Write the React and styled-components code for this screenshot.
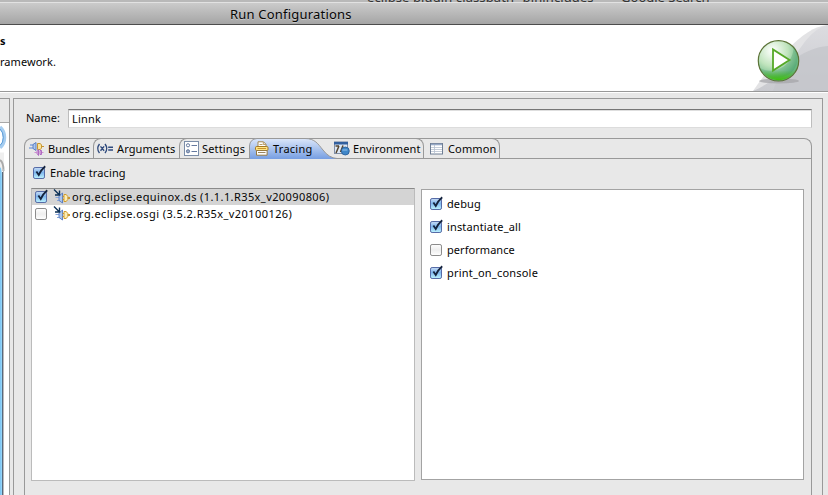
import React from 'react';
import styled, { createGlobalStyle } from 'styled-components';

const GlobalStyle = createGlobalStyle`
  * { box-sizing: border-box; }
  html, body { margin: 0; padding: 0; overflow: hidden; }
  body { font: 11px/16px "Lucida Grande", "Noto Sans", sans-serif; color: #050505; background: #e8e8e8; }
  svg { display: block; flex: none; overflow: visible; }
`;

const Window = styled.div`
  width: 828px;
  height: 495px;
  display: flex;
  flex-direction: column;
  overflow: hidden;
  background: #e8e8e8;
`;

const Backdrop = styled.div`
  height: 2px;
  flex: none;
  display: flex;
  align-items: flex-end;
  padding-left: 367px;
  overflow: hidden;
  background: #b9b9b9;
  font-size: 13px;
  line-height: 14px;
  color: #333;
  white-space: pre;
`;

const BackdropText = styled.span`
  flex: none;
  margin-bottom: -2px;
  margin-right: 22px;
  letter-spacing: ${(p) => p.$ls || 0}px;
`;

const TitleBar = styled.div`
  height: 23px;
  flex: none;
  padding-left: 230px;
  border-top: 1px solid #e2e2e2;
  border-bottom: 1px solid #4c4c4c;
  background: linear-gradient(#cbcbcb, #a5a5a5);
  font-size: 13px;
  line-height: 22px;
  text-shadow: 0 1px 0 rgba(255, 255, 255, 0.35);
`;

const Text = styled.span`
  display: inline-block;
  white-space: pre;
  letter-spacing: ${(p) => p.$ls || 0}px;
  font-weight: ${(p) => (p.$bold ? 700 : 400)};
`;

const Header = styled.header`
  height: 68px;
  flex: none;
  display: flex;
  justify-content: space-between;
  background: #fff;
  border-bottom: 1px solid #fff;
  box-shadow: inset 0 -1px 0 #999;
`;

const HeaderText = styled.div`
  display: flex;
  flex-direction: column;
  gap: 5px;
  padding-top: 8px;
`;

const Body = styled.div`
  flex: 1;
  min-height: 0;
  display: flex;
  gap: 3px;
  padding: 5px 5px 0 0;
`;

const Sidebar = styled.aside`
  width: 10px;
  display: flex;
  flex-direction: column;
  border-top: 1px solid #999;
  border-right: 1px solid #999;
  background: #fff;
`;

const SidebarTools = styled.div`
  height: 24px;
  flex: none;
  background: #e8e8e8;
  border-bottom: 1px solid #a8a8a8;
`;

const Panel = styled.main`
  flex: 1;
  display: flex;
  flex-direction: column;
  padding: 10px 10px 0;
  border: 1px solid #999;
  border-bottom: 0;
`;

const NameRow = styled.label`
  display: flex;
  height: 19px;
  padding-left: 2px;
  line-height: 17px;
`;

const NameLabel = styled.span`
  width: 42px;
`;

const NameField = styled.div`
  flex: 1;
  padding-left: 3px;
  background: #fff;
  border: 1px solid #bdbdbd;
  border-top-color: #777;
  border-bottom-color: #dcdcdc;
  box-shadow: inset 0 1px 0 #dedede;
`;

const Folder = styled.section`
  flex: 1;
  display: flex;
  flex-direction: column;
  margin-top: 10px;
  border: 1px solid #999;
  border-bottom: 0;
  border-radius: 8px 8px 0 0;
`;

const TabBar = styled.div`
  height: 20px;
  flex: none;
  display: flex;
  border-bottom: 1px solid #999;
`;

const Tab = styled.div`
  width: ${(p) => p.$w}px;
  height: 21px;
  flex: none;
  display: flex;
  align-items: center;
  gap: ${(p) => p.$gap}px;
  padding-left: ${(p) => p.$pad}px;
  white-space: nowrap;
  margin-top: -1px;
  border: 0 solid #999;
  ${(p) => p.$edge === 'left' && 'height: 20px; border-left-width: 1px; border-top-width: 1px; border-top-left-radius: 8px;'}
  ${(p) => p.$edge === 'right' && 'height: 20px; border-right-width: 1px; border-top-width: 1px; border-top-right-radius: 8px;'}
`;

const ActiveTab = styled(Tab)`
  position: relative;
  z-index: 1;
`;

const TabShape = styled.svg`
  position: absolute;
  left: 0;
  top: 0;
  z-index: -1;
`;

const EnableRow = styled.div`
  height: 29px;
  flex: none;
  display: flex;
  align-items: center;
  gap: 4px;
  padding: 0 0 2px 8px;
`;

const Lists = styled.div`
  display: flex;
  gap: 6px;
  padding-left: 6px;
`;

const PluginList = styled.div`
  width: 384px;
  height: 293px;
  background: #fff;
  border: 1px solid #bbb;
  border-top-color: #8a8a8a;
`;

const PluginRow = styled.div`
  height: ${(p) => (p.$selected ? 16 : 18)}px;
  display: flex;
  align-items: center;
  padding-left: 3px;
  background: ${(p) => (p.$selected ? '#d4d4d4' : '#fff')};
  & > svg + svg { margin: 0 2px 0 6px; }
`;

const OptionList = styled.div`
  width: 383px;
  height: 291px;
  margin-top: 1px;
  padding: 2px 0 0 8px;
  background: #fff;
  border: 1px solid #a3a3a3;
`;

const OptionRow = styled.div`
  height: 23px;
  display: flex;
  align-items: center;
  gap: 4px;
`;

function Check({ on }) {
  return (
    <svg width="13" height="14" viewBox="0 0 13 14">
      <defs>
        <linearGradient id="ckOn" x1="0" y1="0" x2="0" y2="1">
          <stop offset="0" stopColor="#c9dcf5" />
          <stop offset=".45" stopColor="#7fb6ee" />
          <stop offset="1" stopColor="#bdf4ff" />
        </linearGradient>
        <linearGradient id="ckOff" x1="0" y1="0" x2="0" y2="1">
          <stop offset="0" stopColor="#fff" />
          <stop offset=".5" stopColor="#eee" />
          <stop offset="1" stopColor="#fff" />
        </linearGradient>
      </defs>
      <rect x=".5" y="1.5" width="11" height="11" rx="1.6" fill={on ? 'url(#ckOn)' : 'url(#ckOff)'} stroke={on ? '#566ba6' : '#8b8b8b'} />
      {on && <path d="M3.4 5.6 L5.7 9 Q8 4 12.2 .3" fill="none" stroke="#15233d" strokeWidth="1.8" />}
    </svg>
  );
}

function PluginIcon() {
  return (
    <svg width="16" height="16" viewBox="0 0 16 16">
      <path d="M1.500 8.500H5M3 11.500h3" stroke="#86a5dc" strokeWidth="1.2" />
      <path d="M5 7 8.500 4v10L5 11.500z" fill="#a9c5ef" stroke="#5579bd" strokeWidth=".9" />
      <path d="M10 5.500h2.200l1.600 2v3l-1.600 2H10z" fill="#fdeeb4" stroke="#d09b2e" />
      <path d="M8.500 7.500H10M8.500 10.500H10M14 8.500h2M14 9.500h2" stroke="#c79632" />
      <path d="M0 .5 5 5.500M5.500 1.500V6H1" fill="none" stroke="#0d3157" strokeWidth="1.4" />
    </svg>
  );
}

function BundlesIcon() {
  return (
    <svg width="16" height="16" viewBox="0 0 16 16">
      <path d="M1 4h4M0 7h4" stroke="#86a5dc" strokeWidth="1.4" />
      <path d="M4 3.500 7 1.500v8L4 7.500z" fill="#a9c5ef" stroke="#5579bd" strokeWidth=".9" />
      <path d="M8.500 2.500h2.800l1.200 1.500v3l-1.200 1.500H8.500z" fill="#fbe49a" stroke="#c79632" />
      <path d="M12.500 5.500H15" stroke="#c79632" />
      <path d="M5.500 11.500h2M12.500 11.500h2" stroke="#d08cd3" />
      <path d="M9.500 8.500 8 10.500v2l1.500 2zM11 9.500h1.500v4H11z" fill="#e7bce7" stroke="#a960bd" strokeWidth=".9" />
    </svg>
  );
}

function ArgumentsIcon() {
  return (
    <svg width="17" height="12" viewBox="0 0 17 12" fill="none" stroke="#2f4a7d" strokeWidth="1.4">
      <path d="M2.500 1Q-1 5.500 2.500 10M8 1q3.500 4.500 0 9M3.500 3.400l3.600 4.400M7.100 3.400 3.500 7.800M11.200 4.300H16M11.200 7H16" />
    </svg>
  );
}

function SettingsIcon() {
  return (
    <svg width="15" height="15" viewBox="0 0 15 15">
      <rect x=".5" y=".5" width="14" height="14" fill="#fff" stroke="#7b8da8" />
      <circle cx="4" cy="4.300" r="1.600" fill="#fff" stroke="#65799e" />
      <circle cx="4" cy="10.300" r="1.600" fill="#9cabc5" stroke="#65799e" />
      <path d="M7.500 4.500H13M7.500 10.500H13" stroke="#65799e" />
    </svg>
  );
}

function TracingIcon() {
  return (
    <svg width="14" height="15" viewBox="0 0 14 15">
      <path d="M3 6V.8h5.500L11 3.300V6" fill="#fff" stroke="#a28852" />
      <path d="M8.300 1v2.500H11M4.500 3.500h3" fill="none" stroke="#b89d68" />
      <rect x=".5" y="5.500" width="12.500" height="4" rx="1.200" fill="#ffe584" stroke="#a47823" />
      <path d="M2.500 7.500h8.600" stroke="#c9942e" />
      <path d="M1.500 9.500h10.600v4.700H1.500z" fill="#fff" stroke="#987a40" />
      <path d="M3 11.500h7.500" stroke="#9b8661" />
    </svg>
  );
}

function EnvironmentIcon() {
  return (
    <svg width="16" height="15" viewBox="0 0 16 15">
      <rect x=".5" y="1" width="13" height="11.500" fill="#dde8f5" stroke="#8290a8" />
      <path d="M0 2.200h14" stroke="#315f9e" strokeWidth="2.600" />
      <path d="M1.500 5h3.500M5 5 2 12M9 4.500 6.500 11" fill="none" stroke="#56452f" strokeWidth="1.500" />
      <circle cx="11.300" cy="10" r="4" fill="#3f86c8" stroke="#245994" strokeWidth=".8" />
      <path d="M8.300 9h5" stroke="#8fbfe8" strokeWidth="1.100" />
    </svg>
  );
}

function CommonIcon() {
  return (
    <svg width="13" height="12" viewBox="0 0 13 12">
      <rect x=".5" y=".5" width="12" height="10.500" fill="#fff" stroke="#6f7e94" />
      <path d="M1 1.500h11" stroke="#96a9c6" strokeWidth="1.600" />
      <path d="M1 4.500h11M1 6.500h11M1 8.500h11M4.500 2v9" stroke="#b6c0cf" strokeWidth=".8" />
    </svg>
  );
}

function RunBanner() {
  return (
    <svg width="75" height="66" viewBox="0 0 75 66">
      <defs>
        <radialGradient id="ball" cx=".35" cy=".25" r=".85">
          <stop offset="0" stopColor="#fff" />
          <stop offset=".45" stopColor="#c0e4bd" />
          <stop offset=".8" stopColor="#6cb886" />
          <stop offset="1" stopColor="#55aa5c" />
        </radialGradient>
        <linearGradient id="glow" x1="0" y1="0" x2="0" y2="1">
          <stop offset=".75" stopColor="#43b618" stopOpacity="0" />
          <stop offset="1" stopColor="#3fc00c" />
        </linearGradient>
        <linearGradient id="swoosh" x1="0" y1="0" x2="0" y2="1">
          <stop offset="0" stopColor="#dcdce0" />
          <stop offset="1" stopColor="#c9cacf" />
        </linearGradient>
        <clipPath id="bannerClip"><path d="M0 0h75v66H0z" /></clipPath>
      </defs>
      <g clipPath="url(#bannerClip)">
        <path d="M0 66C10 51 20 39 35 24C49 10 61 1 75 0V66z" fill="#e3e3e5" />
        <path d="M0 66C17 59 31 46 41 32C52 17 59 4 75 0V66z" fill="url(#swoosh)" />
        <path d="M20 66C29 38 52 23 75 21V66z" fill="#c4c5cb" opacity=".8" />
      </g>
      <ellipse cx="26" cy="56" rx="20" ry="2.400" fill="#a5a6aa" opacity=".75" />
      <circle cx="25.500" cy="35.800" r="20.200" fill="url(#ball)" stroke="#5c7338" strokeWidth="1.200" />
      <path d="M41 21C48 34 44 48 30 52C18 55 9 50 7 43C17 49 39 46 41 21z" fill="#2b8c55" opacity=".25" />
      <circle cx="25.500" cy="35.800" r="19.400" fill="url(#glow)" />
      <path d="M20 24.500v21L36.500 35z" fill="#fff" stroke="#56a927" strokeWidth="1.800" />
    </svg>
  );
}

function SidebarArt() {
  return (
    <svg width="9" height="373" viewBox="0 0 9 373">
      <defs>
        <linearGradient id="bar" x1="0" y1="0" x2="1" y2="0">
          <stop offset="0" stopColor="#6fb9ee" />
          <stop offset=".7" stopColor="#9fe0ff" />
          <stop offset="1" stopColor="#5798d4" />
        </linearGradient>
      </defs>
      <path d="M0 4Q4.500 8 4.500 14.500 4.500 21 0 24.500" fill="none" stroke="#a6cdf0" strokeWidth="3.500" />
      <path d="M0 6Q3.300 9 3.300 14.500 3.300 20 0 22.500" fill="none" stroke="#5a9bd8" />
      <path d="M0 29.500h4V373H0z" fill="#efefef" />
      <path d="M0 37Q3.500 39 3.500 48" stroke="#aaa" strokeWidth="2" fill="none" />
      <path d="M0 44Q2 46 2 53V373H0z" fill="url(#bar)" />
      <path d="M2.500 49V373" stroke="#57677c" />
      <path d="M3.500 46V373" stroke="#bbb" />
    </svg>
  );
}

const pluginRows = [
  { name: 'org.eclipse.equinox.ds (1.1.1.R35x_v20090806)', on: true, ls: 0.41 },
  { name: 'org.eclipse.osgi (3.5.2.R35x_v20100126)', on: false, ls: 0.42 },
];

const options = [
  { name: 'debug', on: true, ls: 0.1 },
  { name: 'instantiate_all', on: true, ls: 0.15 },
  { name: 'performance', on: false, ls: 0.05 },
  { name: 'print_on_console', on: true, ls: 0.2 },
];

export default function App() {
  return (
    <Window>
      <GlobalStyle />
      <Backdrop>
        <BackdropText $ls={0.1}>eclipse plugin classpath "pinincludes"</BackdropText>
        <BackdropText $ls={0}>Google Search</BackdropText>
      </Backdrop>
      <TitleBar><Text $ls={0.2}>Run Configurations</Text></TitleBar>
      <Header>
        <HeaderText>
          <Text $bold>s</Text>
          <Text $ls={0.05}>ramework.</Text>
        </HeaderText>
        <RunBanner />
      </Header>
      <Body>
        <Sidebar>
          <SidebarTools />
          <SidebarArt />
        </Sidebar>
        <Panel>
          <NameRow>
            <NameLabel><Text>Name:</Text></NameLabel>
            <NameField><Text $ls={0.2}>Linnk</Text></NameField>
          </NameRow>
          <Folder>
            <TabBar>
              <Tab $w={68} $pad={4} $gap={3}><BundlesIcon /><Text $ls={0}>Bundles</Text></Tab>
              <Tab $w={86} $pad={3} $gap={3} $edge="left"><ArgumentsIcon /><Text $ls={0.1}>Arguments</Text></Tab>
              <Tab $w={70} $pad={4} $gap={3} $edge="left"><SettingsIcon /><Text $ls={0.15}>Settings</Text></Tab>
              <ActiveTab $w={80} $pad={6} $gap={4}>
                <TabShape width="90" height="21" viewBox="0 0 90 21">
                  <defs>
                    <linearGradient id="tabFill" x1="0" y1="0" x2="0" y2="1">
                      <stop offset="0" stopColor="#dce7fa" />
                      <stop offset="1" stopColor="#769ee2" />
                    </linearGradient>
                  </defs>
                  <path d="M0 21V8Q1 1 8 .5H56C66 .5 69 6 74 12Q80 20 88 20.500V21z" fill="url(#tabFill)" />
                  <path d="M.5 21V8Q1 1 8 .5H56C66 .5 69 6 74 12Q80 20 88 20.500" fill="none" stroke="#999" />
                </TabShape>
                <TracingIcon /><Text $ls={0.25}>Tracing</Text>
              </ActiveTab>
              <Tab $w={95} $pad={5} $gap={3} $edge="right"><EnvironmentIcon /><Text $ls={0.1}>Environment</Text></Tab>
              <Tab $w={76} $pad={6} $gap={5} $edge="right"><CommonIcon /><Text $ls={0.15}>Common</Text></Tab>
            </TabBar>
            <EnableRow><Check on /><Text $ls={0.13}>Enable tracing</Text></EnableRow>
            <Lists>
              <PluginList>
                {pluginRows.map((r) => (
                  <PluginRow key={r.name} $selected={r.on}>
                    <Check on={r.on} /><PluginIcon /><Text $ls={r.ls}>{r.name}</Text>
                  </PluginRow>
                ))}
              </PluginList>
              <OptionList>
                {options.map((o) => (
                  <OptionRow key={o.name}><Check on={o.on} /><Text $ls={o.ls}>{o.name}</Text></OptionRow>
                ))}
              </OptionList>
            </Lists>
          </Folder>
        </Panel>
      </Body>
    </Window>
  );
}
